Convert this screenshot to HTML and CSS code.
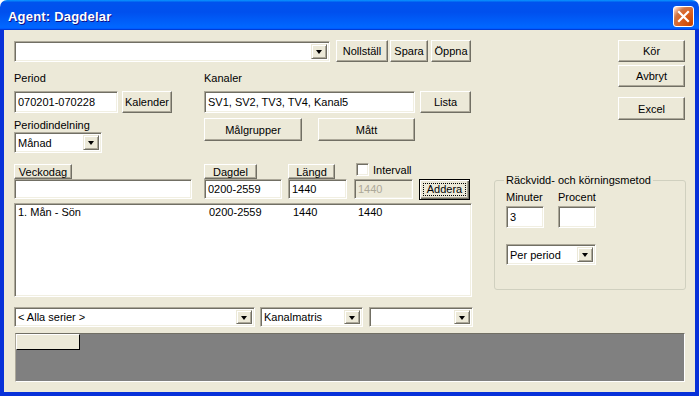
FILE: index.html
```html
<!DOCTYPE html>
<html lang="sv">
<head>
  <meta charset="UTF-8">
  <title>Agent: Dagdelar</title>
  <link rel="stylesheet" href="styles.css">
</head>
<body>
  <div class="window">
    <div class="titlebar">
      <span class="title">Agent: Dagdelar</span>
      <span class="close">
        <svg width="19" height="19" viewBox="0 0 19 19">
          <path d="M5 5 L14 14 M14 5 L5 14" stroke="#fff" stroke-width="2.2" stroke-linecap="square"/>
        </svg>
      </span>
    </div>

    <div class="client">
      <div class="top">
        <div class="main">
          <div class="row-search">
            <div class="combo w-search"><span class="combo-text"></span><span class="arrow"></span></div>
            <button class="btn w-noll">Nollställ</button>
            <button class="btn w-spara">Spara</button>
            <button class="btn w-oppna">Öppna</button>
          </div>

          <div class="row-mid">
            <div class="period-col">
              <div class="label">Period</div>
              <div class="field-row">
                <div class="input w-period">070201-070228</div>
                <button class="btn w-kal">Kalender</button>
              </div>
              <div class="label label-gap">Periodindelning</div>
              <div class="combo w-manad"><span class="combo-text">Månad</span><span class="arrow"></span></div>
            </div>

            <div class="kanal-col">
              <div class="label">Kanaler</div>
              <div class="field-row">
                <div class="input w-kanal">SV1, SV2, TV3, TV4, Kanal5</div>
                <button class="btn w-lista">Lista</button>
              </div>
              <div class="btn-row">
                <button class="btn w-mal">Målgrupper</button>
                <button class="btn w-matt">Mått</button>
              </div>
            </div>
          </div>

          <div class="row-cols">
            <div class="col col-veck">
              <button class="hbtn w-hveck">Veckodag</button>
              <div class="input small"></div>
            </div>
            <div class="col col-dag">
              <button class="hbtn w-hdag">Dagdel</button>
              <div class="input small">0200-2559</div>
            </div>
            <div class="col col-len">
              <button class="hbtn w-hlen">Längd</button>
              <div class="input small">1440</div>
            </div>
            <div class="col col-int">
              <div class="check-row"><span class="checkbox"></span><span>Intervall</span></div>
              <div class="input small disabled">1440</div>
            </div>
            <button class="btn default w-add"><span class="focus">Addera</span></button>
          </div>

          <div class="listbox">
            <div class="list-row">
              <span class="cell c1">1. Mån - Sön</span>
              <span class="cell c2">0200-2559</span>
              <span class="cell c3">1440</span>
              <span class="cell">1440</span>
            </div>
          </div>
        </div>

        <div class="side">
          <div class="cmd-buttons">
            <button class="btn w-cmd">Kör</button>
            <button class="btn w-cmd gap-s">Avbryt</button>
            <button class="btn w-cmd gap-l">Excel</button>
          </div>

          <fieldset class="group">
            <legend>Räckvidd- och körningsmetod</legend>
            <div class="pair-labels">
              <span class="pair-col">Minuter</span>
              <span class="pair-col">Procent</span>
            </div>
            <div class="pair-inputs">
              <div class="input w-pair">3</div>
              <div class="input w-pair"></div>
            </div>
            <div class="combo w-per"><span class="combo-text">Per period</span><span class="arrow"></span></div>
          </fieldset>
        </div>
      </div>

      <div class="bottom-combos">
        <div class="combo w-serier"><span class="combo-text">&lt; Alla serier &gt;</span><span class="arrow"></span></div>
        <div class="combo w-matris"><span class="combo-text">Kanalmatris</span><span class="arrow"></span></div>
        <div class="combo w-tom"><span class="combo-text"></span><span class="arrow"></span></div>
      </div>

      <div class="canvas">
        <div class="tab-stub"></div>
      </div>
    </div>
  </div>
</body>
</html>
```

FILE: styles.css
```css
* {
  box-sizing: border-box;
}

body {
  margin: 0;
  background: #fff;
  font-family: "Liberation Sans", Arial, sans-serif;
  font-size: 11px;
  color: #000;
}

.window {
  width: 699px;
  height: 396px;
  display: flex;
  flex-direction: column;
}

/* title bar */

.titlebar {
  height: 30px;
  flex: none;
  display: flex;
  align-items: center;
  justify-content: space-between;
  padding: 2px 5px 0 8px;
  border-radius: 7px 7px 0 0;
  background: linear-gradient(180deg, #0997ff, #0053ee 8%, #0050ee 40%, #0066ff 88%, #0066ff 93%, #005bff 95%, #003dd7 96%, #003dd7);
}

.title {
  color: #fff;
  font: bold 13px "Liberation Sans", Arial, sans-serif;
  letter-spacing: 0.2px;
  text-shadow: 1px 1px #0f1089;
}

.close {
  width: 21px;
  height: 21px;
  display: flex;
  align-items: center;
  justify-content: center;
  border: 1px solid #fff;
  border-radius: 3px;
  background: radial-gradient(circle at 90% 90%, #cc4600 0%, #dc6527 55%, #cd7546 70%, #ffccb2 90%, #fff 100%);
}

/* client area */

.client {
  flex: 1;
  background: #ece9d8;
  border: 4px solid #0831d9;
  border-top: 0;
  padding: 10px 0 0 10px;
}

.top {
  display: flex;
}

.main {
  width: 459px;
}

.side {
  width: 192px;
  margin-left: 21px;
}

/* controls */

.btn,
.hbtn {
  font: inherit;
  color: #000;
  padding: 0;
  background: #ece9d8;
  border: 1px solid;
  border-color: #fff #716f64 #716f64 #fff;
  box-shadow: inset -1px -1px #aca899;
  text-align: center;
  flex: none;
}

.btn {
  height: 22px;
}

.hbtn {
  height: 15px;
  line-height: 12px;
}

.btn.default {
  border: 1px solid #000;
  box-shadow: inset 1px 1px #fff, inset -1px -1px #716f64, inset -2px -2px #aca899;
  padding: 3px;
}

.focus {
  display: block;
  height: 100%;
  line-height: 12px;
  outline: 1px dotted #000;
  outline-offset: -1px;
}

.input,
.combo,
.checkbox,
.listbox {
  background: #fff;
  border: 1px solid;
  border-color: #aca899 #fff #fff #aca899;
  box-shadow: inset 1px 1px #716f64, inset -1px -1px #f1efe2;
}

.input {
  height: 21px;
  display: flex;
  align-items: center;
  padding: 0 3px;
  white-space: nowrap;
  overflow: hidden;
  flex: none;
}

.input.small {
  height: 20px;
}

.input.disabled {
  background: #ece9d8;
  color: #aca899;
}

.combo {
  height: 21px;
  display: flex;
  align-items: stretch;
  padding: 2px;
  flex: none;
}

.combo-text {
  flex: 1;
  display: flex;
  align-items: center;
  padding-left: 1px;
  white-space: nowrap;
}

.arrow {
  width: 16px;
  display: flex;
  align-items: center;
  justify-content: center;
  background: #ece9d8;
  border: 1px solid;
  border-color: #ece9d8 #716f64 #716f64 #ece9d8;
  box-shadow: inset 1px 1px #fff, inset -1px -1px #aca899;
}

.arrow::after {
  content: "";
  border-left: 3.5px solid transparent;
  border-right: 3.5px solid transparent;
  border-top: 4px solid #000;
  margin-top: 1px;
}

.label {
  height: 13px;
  line-height: 13px;
}

/* first row */

.row-search {
  display: flex;
  align-items: center;
  height: 22px;
}

.w-search { width: 316px; margin-right: 6px; }
.w-noll { width: 52px; margin-right: 2px; }
.w-spara { width: 38px; margin-right: 3px; }
.w-oppna { width: 40px; }

/* period and channels */

.row-mid {
  display: flex;
  margin-top: 10px;
}

.period-col {
  width: 158px;
  margin-right: 32px;
}

.field-row {
  display: flex;
  margin-top: 6px;
}

.label-gap {
  margin-top: 6px;
}

.w-period { width: 104px; height: 22px; }
.w-kal { width: 50px; margin-left: 4px; }
.w-manad { width: 88px; }

.kanal-col {
  width: 269px;
}

.w-kanal { width: 211px; height: 22px; }
.w-lista { width: 51px; margin-left: 5px; }

.btn-row {
  display: flex;
  margin-top: 5px;
}

.w-mal { width: 98px; height: 23px; }
.w-matt { width: 97px; height: 23px; margin-left: 16px; }

/* column headers */

.row-cols {
  display: flex;
  margin-top: 11px;
}

.col {
  display: flex;
  flex-direction: column;
  flex: none;
}

.col-veck { width: 178px; margin-right: 12px; }
.col-dag { width: 78px; margin-right: 6px; }
.col-len { width: 59px; margin-right: 7px; }
.col-int { width: 59px; margin-right: 6px; }

.w-hveck { width: 58px; }
.w-hdag { width: 53px; }
.w-hlen { width: 47px; }

.check-row {
  height: 15px;
  display: flex;
  align-items: flex-start;
  gap: 4px;
  padding-left: 2px;
}

.checkbox {
  width: 13px;
  height: 13px;
  margin-top: -1px;
  flex: none;
}

.w-add {
  width: 51px;
  height: 21px;
  margin-top: 15px;
}

.listbox {
  width: 458px;
  height: 94px;
  margin-top: 3px;
  padding: 2px 3px;
}

.list-row {
  display: flex;
  line-height: 13px;
}

.c1 { width: 191px; }
.c2 { width: 84px; }
.c3 { width: 65px; }

/* side */

.cmd-buttons {
  display: flex;
  flex-direction: column;
  align-items: flex-end;
  padding-right: 1px;
}

.w-cmd { width: 67px; }
.gap-s { margin-top: 3px; }
.gap-l { margin-top: 10px; height: 23px; }

.group {
  margin: 54px 0 0 0;
  width: 192px;
  padding: 4px 11px 24px 11px;
  border: 1px solid #d0d0bf;
  border-radius: 3px;
}

.group legend {
  padding: 0 2px;
  margin-left: -2px;
  line-height: 13px;
}

.pair-labels {
  display: flex;
  height: 13px;
  line-height: 13px;
}

.pair-col {
  width: 52px;
}

.pair-inputs {
  display: flex;
  gap: 14px;
  margin-top: 2px;
}

.w-pair { width: 38px; height: 22px; }
.w-per { width: 90px; margin-top: 16px; }

/* bottom */

.bottom-combos {
  display: flex;
  margin-top: 10px;
}

.bottom-combos .combo {
  height: 20px;
}

.w-serier { width: 241px; margin-right: 5px; }
.w-matris { width: 103px; margin-right: 6px; }
.w-tom { width: 104px; }

.canvas {
  width: 670px;
  height: 49px;
  margin: 6px 0 0 1px;
  background: #808080;
  border: 1px solid;
  border-color: #716f64 #fff #fff #aca899;
}

.tab-stub {
  width: 64px;
  height: 16px;
  background: #ece9d8;
  border: 1px solid;
  border-color: #fff #000 #000 #fff;
}
```
